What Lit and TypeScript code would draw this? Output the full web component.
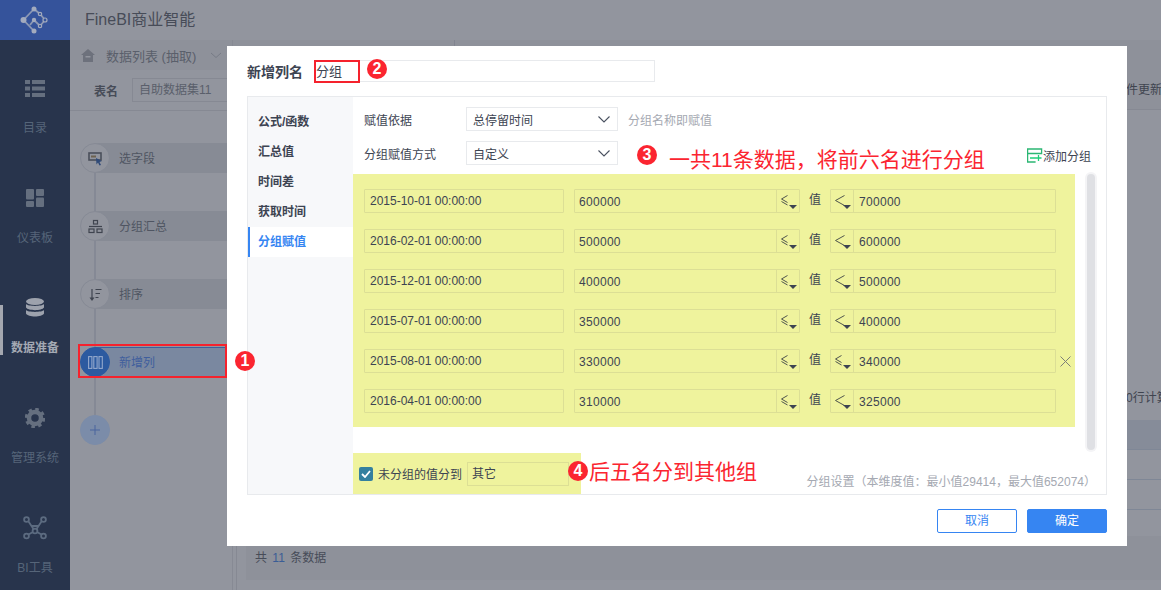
import { LitElement, html, css, svg } from "lit";
import { customElement } from "lit/decorators.js";

const icons: Record<string, unknown> = {
  list: svg`<g fill="#656f7f"><rect x="0" y="0" width="5" height="4"/><rect x="7" y="0" width="13" height="4"/><rect x="0" y="6.500" width="5" height="4"/><rect x="7" y="6.500" width="13" height="4"/><rect x="0" y="13" width="5" height="4"/><rect x="7" y="13" width="13" height="4"/></g>`,
  dash: svg`<g fill="#656f7f"><rect x="0" y="0" width="8" height="10.500" rx="1"/><rect x="10" y="0" width="8" height="7" rx="1"/><rect x="0" y="12" width="8" height="6" rx="1"/><rect x="10" y="8.500" width="8" height="9.500" rx="1"/></g>`,
  db: svg`<g fill="#9da2ad"><ellipse cx="10" cy="3.500" rx="9" ry="3.500"/><path d="M1 6c2 2.500 16 2.500 18 0v3.500c-2 3.500-16 3.500-18 0z"/><path d="M1 12c2 2.500 16 2.500 18 0v3.500c-2 4-16 4-18 0z"/></g>`,
  gear: svg`<g fill="none" stroke="#656f7f"><circle cx="10" cy="10" r="6" stroke-width="4.500"/><circle cx="10" cy="10" r="8.500" stroke-width="3.500" stroke-dasharray="3.400 3.270"/></g>`,
  tool: svg`<g fill="none" stroke="#5c6b80" stroke-width="1.800"><circle cx="3.500" cy="3.500" r="2.400"/><circle cx="20.500" cy="3.500" r="2.400"/><circle cx="3.500" cy="20" r="2.400"/><circle cx="20.500" cy="20" r="2.400"/><circle cx="12" cy="15" r="2.400"/><path d="M5.500 5.500L10.500 13M18.500 5.500L13.500 13M5.500 18.500L10 16M18.500 18.500L14 16M8 10h8"/></g>`,
};

const nav = [
  { label: "目录", icon: "list", w: 20, h: 17, vb: "0 0 20 17" },
  { label: "仪表板", icon: "dash", w: 18, h: 18, vb: "0 0 18 18" },
  { label: "数据准备", icon: "db", w: 20, h: 20, vb: "0 0 20 20", active: true },
  { label: "管理系统", icon: "gear", w: 20, h: 20, vb: "0 0 20 20" },
  { label: "BI工具", icon: "tool", w: 24, h: 24, vb: "0 0 24 24" },
];

const steps = [
  { label: "选字段", icon: svg`<rect x="1" y="2" width="12" height="7" fill="none" stroke="#4a4f5a" stroke-width="1.600"/><rect x="3" y="4.500" width="5" height="2" fill="#6d6250"/><path d="M8 7l6 3-2.500 1 1.500 3-1.500.6-1.500-3-1.500 2z" fill="#2f4a78"/>` },
  { label: "分组汇总", icon: svg`<g fill="none" stroke="#3f444f" stroke-width="1.200"><rect x="5.500" y="1.500" width="4" height="3.500"/><rect x="1" y="10" width="5" height="3.500"/><rect x="9" y="10" width="5" height="3.500"/><path d="M1 7.500h13"/></g>` },
  { label: "排序", icon: svg`<g fill="none" stroke="#3f444f" stroke-width="1.200"><path d="M4 2v10"/><path d="M7.500 2.500h6M7.500 6.500h4.500M7.500 10.500h3"/></g><path d="M1.500 10.500h5L4 14z" fill="#3f444f"/>` },
];

const rows = [
  ["2015-10-01 00:00:00", "600000", "le", "lt", "700000", false],
  ["2016-02-01 00:00:00", "500000", "le", "lt", "600000", false],
  ["2015-12-01 00:00:00", "400000", "le", "lt", "500000", false],
  ["2015-07-01 00:00:00", "350000", "le", "lt", "400000", false],
  ["2015-08-01 00:00:00", "330000", "le", "le", "340000", true],
  ["2016-04-01 00:00:00", "310000", "le", "lt", "325000", false],
] as const;

const tabs = ["公式/函数", "汇总值", "时间差", "获取时间", "分组赋值"];

@customElement("app-root")
export class AppRoot extends LitElement {
  static styles = css`
    :host {
      display: block;
      position: relative;
      width: 100%;
      height: 590px;
      overflow: hidden;
      font-family: "Liberation Sans", "Noto Sans CJK SC", sans-serif;
      font-size: 12px;
      color: #4a4f5a;
      background: #92959e;
    }
    * { box-sizing: border-box; }
    .page { display: flex; height: 590px; }

    .side { width: 70px; flex: none; background: #28344c; }
    .logo { height: 40px; background: #35539b; display: flex; align-items: center; justify-content: center; }
    .nav { padding-top: 33px; }
    .nav-item { position: relative; height: 110px; display: flex; flex-direction: column; align-items: center; color: #566579; }
    .nav-icon { height: 30px; display: flex; align-items: center; justify-content: center; }
    .nav-label { margin-top: 17px; line-height: 16px; }
    .nav-item.on { color: #a4a9b3; font-weight: bold; }
    .nav-item.on::before { content: ""; position: absolute; left: 0; top: 12px; width: 3px; height: 50px; background: #a4a7af; }

    .main { flex: 1; min-width: 0; display: flex; flex-direction: column; }
    .head { height: 40px; flex: none; padding-left: 15px; font-size: 16px; line-height: 40px; color: #474c58; }
    .body { flex: 1; display: flex; min-height: 0; }

    .left { width: 163px; flex: none; background: #92959e; border-right: 1px solid #878a94; }
    .crumb { height: 30px; background: #8e919a; display: flex; align-items: center; padding-left: 11px; gap: 11px; color: #5a5f6b; font-size: 13px; }
    .crumb-chev { margin-left: 3px; }
    .name-row { height: 41px; display: flex; align-items: center; padding-left: 24px; border-bottom: 1px solid #868993; gap: 14px; }
    .name-row b { color: #474c58; }
    .name-val { flex: 1; height: 24px; border: 1px solid #868993; border-right: 0; line-height: 22px; padding-left: 6px; color: #5a5f6b; }

    .steps { padding: 32px 0 0 10px; display: flex; flex-direction: column; position: relative; }
    .step { position: relative; height: 30px; margin-bottom: 38px; display: flex; align-items: center; }
    .step::after { content: ""; position: absolute; left: 14px; top: 30px; width: 2px; height: 38px; background: #858995; }
    .step.last::after { display: none; }
    .bar { position: absolute; left: 15px; top: 0; height: 30px; background: #878b95; width: 137px; }
    .step.sel .bar { background: #7a88a0; border-top: 1px solid #3e5f9c; }
    .dot { position: relative; z-index: 1; width: 30px; height: 30px; border-radius: 50%; background: #92959e; border: 1px solid #868a95; display: flex; align-items: center; justify-content: center; }
    .step.sel .dot { background: #2c5aa0; border-color: #2c5aa0; }
    .step-label { position: relative; z-index: 1; margin-left: 9px; padding-bottom: 2px; color: #4f5562; }
    .step.sel .step-label { color: #3f5e9d; }
    .plus { background: #7b8ca9; border-color: #7b8ca9; }

    .right { flex: 1; min-width: 0; display: flex; flex-direction: column; }
    .r-top { height: 6px; background: #8e919a; flex: none; }
    .r-top-cell { width: 222px; height: 6px; border-right: 1px solid #818490; }
    .r-text { padding-left: 893px; white-space: nowrap; overflow: hidden; color: #3f444f; flex: none; }
    .r-bar { height: 64px; background: #8e919a; border-bottom: 1px solid #868993; line-height: 88px; }
    .r-blank { flex: none; height: 273px; }
    .r-calc { height: 37px; line-height: 30px; }
    .r-row { height: 30px; flex: none; border-bottom: 1px solid #7f8796; }
    .r-row.hd { background: #868c99; }
    .r-wrap { flex: 1; margin-left: 3px; border-left: 1px solid #868993; padding: 26px 0 0 9px; }
    .r-foot { height: 44px; background: #8e919a; padding-left: 9px; line-height: 45px; color: #474c58; word-spacing: 2px; }
    .r-foot em { font-style: normal; color: #3a5d96; }

    .modal { position: absolute; left: 227px; top: 46px; width: 900px; height: 500px; background: #fff; padding: 14px 20px 0; display: flex; flex-direction: column; }
    .title { position: relative; height: 22px; display: flex; align-items: center; flex: none; }
    .title b { width: 67px; font-size: 14px; color: #3d4452; }
    .title-input { width: 341px; height: 22px; border: 1px solid #e8eaed; line-height: 22px; padding-left: 1px; color: #3d4452; font-size: 13px; }
    .redbox { position: absolute; border: 2px solid #f5222d; pointer-events: none; }
    .redbox.name { left: 67px; top: 0; width: 46px; height: 23px; }
    .redbox.step-box { left: -2px; top: -3px; width: 149px; height: 34px; z-index: 2; }
    .badge { width: 20px; height: 20px; border-radius: 50%; background: #fb2530; color: #fff; font-size: 16px; font-weight: bold; display: flex; align-items: center; justify-content: center; flex: none; line-height: 1; }
    .badge.b1 { position: absolute; left: 235px; top: 351px; z-index: 3; }
    .badge.b2 { position: absolute; left: 120px; top: -1px; }

    .panel { margin-top: 14px; height: 399px; border: 1px solid #e8eaed; display: flex; flex: none; }
    .tabs { width: 105px; flex: none; background: #f7f8fa; padding-top: 10px; }
    .tab { height: 30px; line-height: 30px; padding-left: 10px; font-weight: bold; color: #3d4452; }
    .tab.on { background: #fff; color: #3685f2; border-left: 2px solid #3685f2; padding-left: 8px; }

    .content { flex: 1; min-width: 0; display: flex; flex-direction: column; padding-top: 10px; }
    .line { display: flex; align-items: center; height: 24px; padding-left: 11px; margin-bottom: 10px; color: #3d4452; }
    .line-label { width: 102px; flex: none; }
    .select { width: 152px; height: 24px; border: 1px solid #e8eaed; display: flex; align-items: center; justify-content: space-between; padding: 0 7px 0 6px; flex: none; }
    .hint { margin-left: 10px; color: #a5a9b2; }
    .note { margin: 10px 0 0 12px; font-size: 21px; color: #fb2530; white-space: nowrap; }
    .b3 { margin: 4px 0 0 19px; }
    .add { margin: 4px 15px 0 auto; display: flex; align-items: center; white-space: nowrap; color: #3d4452; }

    .scroll { display: flex; height: 276px; margin-top: -1px; flex: none; }
    .yellow { width: 722px; height: 253px; background: #eff39d; padding: 15px 11px 14px; display: flex; flex-direction: column; gap: 16px; flex: none; }
    .thumb { width: 8px; margin-left: 12px; height: 276px; border-radius: 4px; background: #dfe0e4; box-shadow: 0 0 0 2px #f4f4f6; flex: none; }

    .row { display: flex; align-items: center; height: 24px; position: relative; color: #3d4452; }
    .field { border: 1px solid #dcdf95; height: 24px; border-radius: 1px; line-height: 24px; display: flex; flex: none; }
    .f-date { width: 200px; padding-left: 5px; line-height: 22px; }
    .f-a { width: 226px; margin-left: 10px; }
    .f-a .val { flex: 1; padding-left: 4px; letter-spacing: 0.3px; }
    .f-b { width: 226px; }
    .f-b .val { flex: 1; padding-left: 5px; letter-spacing: 0.3px; }
    .op { width: 23px; flex: none; position: relative; display: flex; align-items: flex-start; padding: 5px 0 0 4px; }
    .f-a .op { border-left: 1px solid #dcdf95; }
    .f-b .op { border-right: 1px solid #dcdf95; }
    .op::after { content: ""; position: absolute; right: 2px; bottom: 3px; border: 4px solid transparent; border-top-color: #3d4452; border-bottom: 0; }
    .zhi { width: 30px; text-align: center; flex: none; line-height: 20px; padding-bottom: 3px; }
    .x { margin-left: 4px; display: flex; flex: none; }

    .bottom { display: flex; align-items: flex-end; margin-top: 3px; flex: 1; position: relative; }
    .fallback { width: 228px; height: 41px; background: #eff39d; display: flex; align-items: center; padding-left: 6px; flex: none; color: #3d4452; position: relative; }
    .check { width: 14px; height: 14px; border-radius: 2px; background: #34809f; display: flex; align-items: center; justify-content: center; flex: none; }
    .fb-label { margin-left: 5px; white-space: nowrap; }
    .fb-input { margin-left: 5px; width: 102px; height: 24px; border: 1px solid #dcdf95; line-height: 22px; padding-left: 4px; }
    .b4 { position: absolute; left: 215px; top: 8px; }
    .note4 { margin-left: 8px; margin-bottom: 8px; font-size: 21px; line-height: 28px; color: #fb2530; white-space: nowrap; }
    .range { margin-left: auto; margin-right: 10px; margin-bottom: 5px; color: #a5a9b2; white-space: nowrap; }

    .foot { margin-top: 14px; display: flex; justify-content: flex-end; gap: 10px; }
    .btn { width: 80px; height: 24px; border-radius: 2px; line-height: 22px; text-align: center; border: 1px solid #3685f2; color: #3685f2; background: #fff; }
    .btn.pri { background: #3685f2; color: #fff; }
  `;

  private chev() {
    return html`<svg width="12" height="7" viewBox="0 0 12 7"><path d="M.5.5L6 6 11.500.5" fill="none" stroke="#4a5160" stroke-width="1.100"/></svg>`;
  }

  private op(kind: string) {
    return kind === "lt"
      ? html`<svg width="10" height="11" viewBox="0 0 10 11" role="img" aria-label="小于"><path d="M9.500.5L.5 5.500l9 5" fill="none" stroke="#50564e" stroke-width="1"/></svg>`
      : html`<svg width="8" height="11" viewBox="0 0 8 11" role="img" aria-label="小于等于"><path d="M6.500.5L.5 4l6 3.500M.5 6.500l6 3.500" fill="none" stroke="#50564e" stroke-width="1"/></svg>`;
  }

  render() {
    return html`
      <div class="page">
        <aside class="side">
          <div class="logo">
            <svg width="30" height="30" viewBox="0 0 30 30">
              <g fill="none" stroke="#8c98b4" stroke-width="1.800"><path d="M14 4L3.500 15 14 26M14 15l-4 5M14 15l6 6 5-6-5-6-6-5"/></g>
              <g fill="#a3abbe"><circle cx="14" cy="4" r="2.500"/><circle cx="3.500" cy="15" r="3"/><circle cx="14" cy="26" r="2.500"/><circle cx="14" cy="15" r="2.200"/></g>
              <g fill="#35539b" stroke="#a3abbe" stroke-width="1.200"><circle cx="20" cy="9" r="1.700"/><circle cx="25" cy="15" r="2"/><circle cx="20" cy="21" r="1.700"/></g>
            </svg>
          </div>
          <div class="nav">
            ${nav.map(
              (n) => html`<div class="nav-item ${n.active ? "on" : ""}">
                <div class="nav-icon"><svg width=${n.w} height=${n.h} viewBox=${n.vb}>${icons[n.icon]}</svg></div>
                <div class="nav-label">${n.label}</div>
              </div>`
            )}
          </div>
        </aside>
        <div class="main">
          <div class="head">FineBI商业智能</div>
          <div class="body">
            <div class="left">
              <div class="crumb">
                <svg width="14" height="13" viewBox="0 0 14 13"><path d="M7 0L0 6h2v7h10V6h2z" fill="#6d717c"/><rect x="4.500" y="7" width="5" height="1.500" fill="#92959e"/></svg>
                <span>数据列表 (抽取)</span>
                <svg class="crumb-chev" width="12" height="7" viewBox="0 0 12 7"><path d="M1 1l5 4.500L11 1" fill="none" stroke="#777b86" stroke-width="1"/></svg>
              </div>
              <div class="name-row"><b>表名</b><div class="name-val">自助数据集11</div></div>
              <div class="steps">
                ${steps.map(
                  (s) => html`<div class="step">
                    <div class="bar"></div>
                    <div class="dot"><svg width="15" height="15" viewBox="0 0 15 15">${s.icon}</svg></div>
                    <div class="step-label">${s.label}</div>
                  </div>`
                )}
                <div class="step sel">
                  <div class="bar"></div>
                  <div class="dot"><svg width="15" height="13" viewBox="0 0 15 13"><g fill="none" stroke="#93a8cc" stroke-width="1.100"><rect x=".6" y=".6" width="3.300" height="11.800"/><rect x="5.800" y=".6" width="3.300" height="11.800"/><rect x="11" y=".6" width="3.300" height="11.800"/></g></svg></div>
                  <div class="step-label">新增列</div>
                  <div class="redbox step-box"></div>
                </div>
                <div class="step last">
                  <div class="dot plus"><svg width="10" height="10" viewBox="0 0 10 10"><path d="M5 0v10M0 5h10" stroke="#4a659e" stroke-width="1"/></svg></div>
                </div>
              </div>
            </div>
            <div class="right">
              <div class="r-top"><div class="r-top-cell"></div></div>
              <div class="r-text r-bar">件更新</div>
              <div class="r-blank"></div>
              <div class="r-text r-calc">0行计算</div>
              <div class="r-row hd"></div>
              <div class="r-row"></div>
              <div class="r-row"></div>
              <div class="r-wrap">
                <div class="r-foot">共 <em>11</em> 条数据</div>
              </div>
            </div>
          </div>
        </div>
      </div>

      <div class="badge b1">1</div>

      <div class="modal">
        <div class="title">
          <b>新增列名</b>
          <div class="title-input">分组</div>
          <div class="redbox name"></div>
          <div class="badge b2">2</div>
        </div>
        <div class="panel">
          <div class="tabs">
            ${tabs.map((t, i) => html`<div class="tab ${i === 4 ? "on" : ""}">${t}</div>`)}
          </div>
          <div class="content">
            <div class="line">
              <div class="line-label">赋值依据</div>
              <div class="select"><span>总停留时间</span>${this.chev()}</div>
              <div class="hint">分组名称即赋值</div>
            </div>
            <div class="line">
              <div class="line-label">分组赋值方式</div>
              <div class="select"><span>自定义</span>${this.chev()}</div>
              <div class="badge b3">3</div>
              <div class="note">一共11条数据，将前六名进行分组</div>
              <div class="add">
                <svg width="16" height="15" viewBox="0 0 16 15"><g fill="none" stroke-width="1.300"><path d="M.6 1h14v4.500H.6z" stroke="#2bb673"/><path d="M.6 5.500V14h8" stroke="#2bb673"/><path d="M3 10h11.500M11.500 7v6" stroke="#1fcf7a"/></g></svg>
                <span>添加分组</span>
              </div>
            </div>
            <div class="scroll">
              <div class="yellow">
                ${rows.map(
                  (r) => html`<div class="row">
                    <div class="field f-date">${r[0]}</div>
                    <div class="field f-a"><div class="val">${r[1]}</div><div class="op">${this.op(r[2])}</div></div>
                    <div class="zhi">值</div>
                    <div class="field f-b"><div class="op">${this.op(r[3])}</div><div class="val">${r[4]}</div></div>
                    ${r[5]
                      ? html`<div class="x"><svg width="11" height="11" viewBox="0 0 11 11"><path d="M.5.5l10 10M10.500.5l-10 10" stroke="#7d8078" stroke-width="1"/></svg></div>`
                      : ""}
                  </div>`
                )}
              </div>
              <div class="thumb"></div>
            </div>
            <div class="bottom">
              <div class="fallback">
                <div class="check"><svg width="10" height="8" viewBox="0 0 10 8"><path d="M1 4l3 3 5-6" fill="none" stroke="#fff" stroke-width="1.800"/></svg></div>
                <span class="fb-label">未分组的值分到</span>
                <div class="fb-input">其它</div>
                <div class="badge b4">4</div>
              </div>
              <div class="note4">后五名分到其他组</div>
              <div class="range">分组设置（本维度值：最小值29414，最大值652074）</div>
            </div>
          </div>
        </div>
        <div class="foot">
          <div class="btn">取消</div>
          <div class="btn pri">确定</div>
        </div>
      </div>
    `;
  }
}
